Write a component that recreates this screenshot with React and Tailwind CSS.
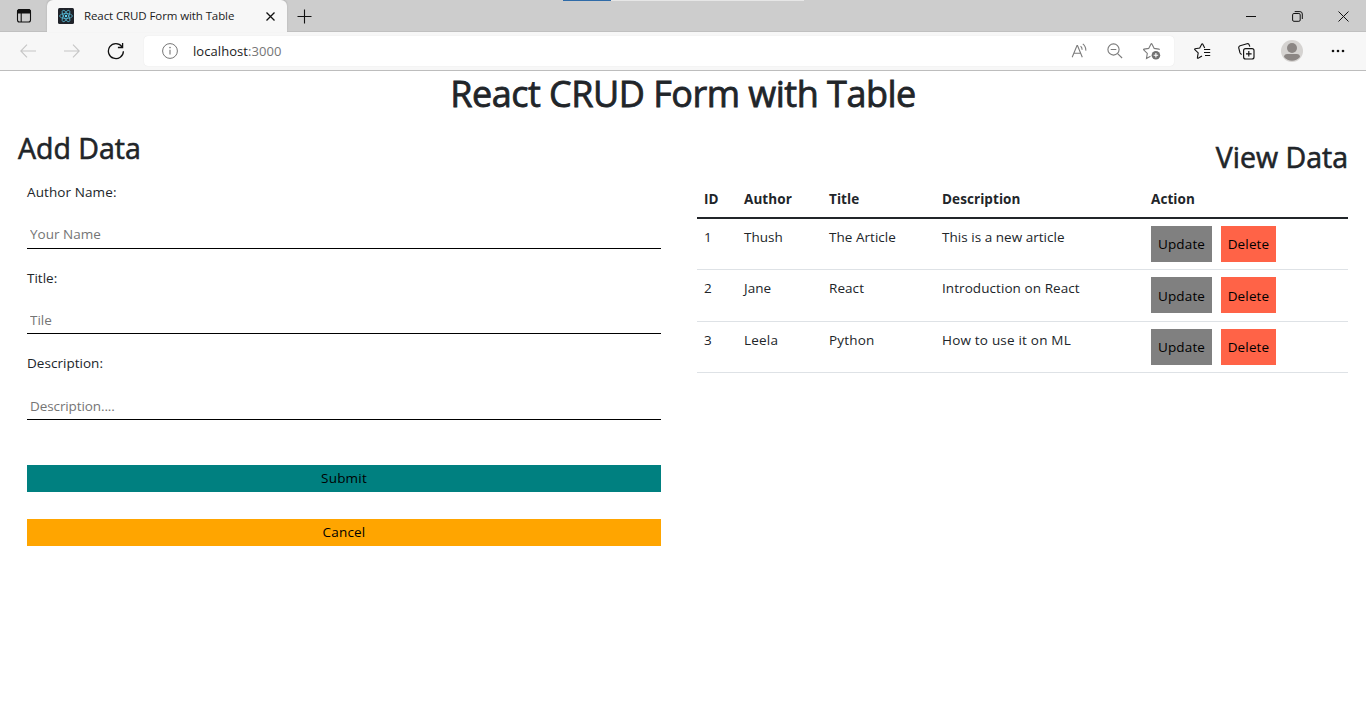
import React from "react";

const fields = [
  { label: "Author Name:", placeholder: "Your Name", size: "h-[69px]", pad: "mb-px", ls: "tracking-[0.1px]", ps: "tracking-[0px]" },
  { label: "Title:", placeholder: "Tile", size: "h-[68px]", pad: "mb-0", ls: "tracking-[0px]", ps: "tracking-[0px]" },
  { label: "Description:", placeholder: "Description....", size: "h-[69px]", pad: "mb-0", ls: "tracking-[0.03px]", ps: "tracking-[-0.1px]" },
];

const rows = [
  { id: 1, author: "Thush", title: "The Article", description: "This is a new article", height: "h-[51px]", ls: "tracking-[0.03px]", button: "leading-9" },
  { id: 2, author: "Jane", title: "React", description: "Introduction on React", height: "h-[52px]", ls: "tracking-[0.07px]", button: "leading-[38px]" },
  { id: 3, author: "Leela", title: "Python", description: "How to use it on ML", height: "h-[51px]", ls: "tracking-[0.2px]", button: "leading-9" },
];

const columns = "grid grid-cols-[40px_85px_113px_209px_1fr] pl-[7px]";

function ReactLogo() {
  return (
    <svg width="16" height="16" viewBox="0 0 16 16" className="shrink-0">
      <rect width="16" height="16" rx="1.5" fill="#20232a" />
      <g fill="none" stroke="#61dafb" strokeWidth="0.75" opacity="0.85">
        <ellipse cx="8" cy="8" rx="6.4" ry="2.5" />
        <ellipse cx="8" cy="8" rx="6.4" ry="2.5" transform="rotate(60 8 8)" />
        <ellipse cx="8" cy="8" rx="6.4" ry="2.5" transform="rotate(120 8 8)" />
      </g>
      <circle cx="8" cy="8" r="1.2" fill="#61dafb" />
    </svg>
  );
}

function TabStrip() {
  return (
    <div className="relative flex h-8 bg-[#cdcdcd] shadow-[inset_0_-1px_0_#c0c0c0]">
      <div className="absolute left-[563px] top-0 flex h-px w-[241px] bg-[#e6e6e6]">
        <div className="h-px w-12 bg-[#2f6ba8]" />
      </div>
      <div className="flex w-[47px] items-center justify-center">
        <svg width="16" height="16" viewBox="0 0 16 16" fill="none" stroke="#111">
          <rect x="1.5" y="1.5" width="13" height="12.5" rx="2" strokeWidth="1.1" />
          <path d="M1.5 4V3.5a2 2 0 0 1 2-2h9a2 2 0 0 1 2 2V5h-13z" fill="#111" />
          <path d="M5.2 5v9" strokeWidth="1.1" />
        </svg>
      </div>
      <div className="relative flex w-60 items-center rounded-t-md bg-[#f7f7f7] pl-[11px] pr-[11px] shadow-[0_-1px_2px_rgba(0,0,0,0.15)]">
        <ReactLogo />
        <span className="ml-[10px] flex-1 whitespace-nowrap text-[11.5px] leading-4 tracking-[-0.1px] text-[#1b1b1b]">
          React CRUD Form with Table
        </span>
        <svg width="11" height="11" viewBox="0 0 11 11" stroke="#111" strokeWidth="1.3">
          <path d="M1.5 1.5l8 8M9.5 1.5l-8 8" />
        </svg>
      </div>
      <div className="flex w-[35px] items-center justify-center">
        <svg width="15" height="15" viewBox="0 0 15 15" stroke="#111" strokeWidth="1.1">
          <path d="M7.5 0.5v14M0.5 7.5h14" />
        </svg>
      </div>
      <div className="ml-auto flex">
        <div className="flex w-[46px] items-center justify-center">
          <svg width="10" height="10" viewBox="0 0 10 10" stroke="#111"><path d="M0 5.5h10" /></svg>
        </div>
        <div className="flex w-[46px] items-center justify-center">
          <svg width="11" height="11" viewBox="0 0 11 11" fill="none" stroke="#111">
            <rect x="0.6" y="2.5" width="7.6" height="7.8" rx="1.3" />
            <path d="M2.7 0.6h5.2a2.4 2.4 0 0 1 2.4 2.4v5" />
          </svg>
        </div>
        <div className="flex w-[46px] items-center justify-center">
          <svg width="11" height="11" viewBox="0 0 11 11" stroke="#111"><path d="M0.5 0.5l10 10M10.5 0.5l-10 10" /></svg>
        </div>
      </div>
    </div>
  );
}

function Toolbar() {
  return (
    <div className="flex h-[39px] items-center border-b border-[#bdbdbd] bg-[#f7f7f7] pl-5">
      <svg width="16" height="14" viewBox="0 0 16 14" fill="none" stroke="#c6c6c6" strokeWidth="1.1">
        <path d="M16 7H0.8M7 0.7L0.8 7L7 13.3" />
      </svg>
      <svg width="16" height="14" viewBox="0 0 16 14" fill="none" stroke="#c6c6c6" strokeWidth="1.1" className="ml-7">
        <path d="M0 7h15.2M9 0.7L15.2 7L9 13.3" />
      </svg>
      <svg width="18" height="18" viewBox="0 0 18 18" fill="none" stroke="#111" strokeWidth="1.3" className="ml-[27px]">
        <path d="M16.4 9.2A7.5 7.5 0 1 1 14.9 4.6M15.6 0.9v4.6h-4.7" />
      </svg>
      <div className="ml-[19px] flex h-[30px] w-[1030px] items-center rounded bg-white pl-[18px] shadow-[0_0_1px_rgba(0,0,0,0.12)]">
        <svg width="16" height="16" viewBox="0 0 16 16" fill="none" stroke="#767676" strokeWidth="1">
          <circle cx="8" cy="8" r="7.4" />
          <path d="M8 6.7v4.8" strokeWidth="1.1" />
          <circle cx="8" cy="4.6" r="0.8" fill="#767676" stroke="none" />
        </svg>
        <span className="ml-[15px] text-[13px] leading-[18px] tracking-[0.06px] text-[#1b1b1b]">
          localhost<span className="text-[#767676]">:3000</span>
        </span>
        <svg width="16" height="16" viewBox="0 0 16 16" fill="none" stroke="#7b7b7b" strokeWidth="1.1" className="ml-auto">
          <path d="M1.2 14.2L6 2.5h0.5l4.8 11.7M2.9 10.2h6.7" />
          <path d="M9.6 3.2a4.5 4.5 0 0 1 1.5 3.6M11.8 0.9a8 8 0 0 1 3 6.7" />
        </svg>
        <svg width="16" height="16" viewBox="0 0 16 16" fill="none" stroke="#7b7b7b" strokeWidth="1.1" className="ml-5">
          <circle cx="6.5" cy="6.5" r="5.6" />
          <path d="M3.7 6.5h5.6M10.6 10.6l4.5 4.4" />
        </svg>
        <svg width="18" height="17" viewBox="0 0 18 17" fill="none" stroke="#7b7b7b" strokeWidth="1.1" className="ml-5 mr-[13px]">
          <path d="M7.5 15.2l-4 2.1 0.8-5-3.6-3.5c-0.3-0.3-0.1-0.7 0.3-0.8l4.7-0.7L8 2.8c0.2-0.4 0.7-0.4 0.9 0l2.3 4.5 4.7 0.7c0.4 0.1 0.5 0.5 0.3 0.8" transform="translate(0 -1.9)" />
          <circle cx="12.9" cy="12.2" r="4.3" fill="#707070" stroke="none" />
          <path d="M12.9 9.9v4.6M10.6 12.2h4.6" stroke="#fff" />
        </svg>
      </div>
      <svg width="17" height="17" viewBox="0 0 17 17" fill="none" stroke="#111" strokeWidth="1.1" className="ml-5">
        <path d="M8 13L4.1 15.2c-0.4 0.2-0.8 0-0.7-0.5l0.8-4.8L0.8 6.6c-0.3-0.3-0.2-0.8 0.3-0.9l4.6-0.6L7.8 1.1c0.2-0.4 0.7-0.4 0.9 0l2 4" />
        <path d="M10 6.5h6.2M10 9.5h6.2M11 12.5h5.2" strokeWidth="1.1" />
      </svg>
      <svg width="17" height="17" viewBox="0 0 17 17" fill="none" stroke="#111" strokeWidth="1.15" className="ml-[27px]">
        <path d="M3.8 11.4C2.8 11.3 2.3 10.7 2 9.9L0.8 5.1c-0.3-1 0.3-2 1.3-2.3L9 0.8c1-0.3 2 0.3 2.3 1.3l0.5 1.6" />
        <rect x="5.6" y="5.6" width="10.4" height="10.4" rx="2" />
        <path d="M10.8 8v5.6M8 10.8h5.6" />
      </svg>
      <svg width="22" height="22" viewBox="0 0 22 22" className="ml-[26px]">
        <circle cx="11" cy="11" r="11" fill="#d5d3d1" />
        <circle cx="11" cy="8" r="5" fill="#8b8684" />
        <path d="M3 17.1c0-2 1.4-3 3.2-3h9.6c1.8 0 3.2 1 3.2 3a10.5 10.5 0 0 1-16 0z" fill="#8b8684" />
      </svg>
      <svg width="14" height="4" viewBox="0 0 14 4" fill="#111" className="ml-7">
        <circle cx="2" cy="2" r="1.3" /><circle cx="7" cy="2" r="1.3" /><circle cx="12" cy="2" r="1.3" />
      </svg>
    </div>
  );
}

function AddForm() {
  return (
    <section className="w-[661px] pt-4">
      <h2 className="ml-[18px] text-[28.5px] font-medium leading-[34px] [-webkit-text-stroke:0.6px_#212529]">Add Data</h2>
      <div className="ml-[27px] mt-[15px]">
        {fields.map((field) => (
          <div key={field.label} className={`mb-[17px] flex flex-col justify-between border-b border-black ${field.size}`}>
            <label className={`text-[13.5px] leading-6 ${field.ls}`}>{field.label}</label>
            <input
              type="text"
              placeholder={field.placeholder}
              className={`h-[26px] w-full px-[3px] text-[13.5px] text-black outline-none placeholder:text-[#757575] ${field.pad} ${field.ps}`}
            />
          </div>
        ))}
        <button className="mt-[45px] block h-[27px] w-full bg-[#008080] text-[13.5px] leading-[27px] tracking-[0.2px] text-black">Submit</button>
        <button className="mt-[27px] block h-[27px] w-full bg-[#ffa500] text-[13.5px] leading-[27px] tracking-[0.2px] text-black">Cancel</button>
      </div>
    </section>
  );
}

function DataTable() {
  return (
    <section className="ml-9 w-[651px] pt-[25px] text-[13.5px]">
      <h2 className="text-right text-[28.5px] font-medium leading-[34px] [-webkit-text-stroke:0.6px_#212529]">View Data</h2>
      <div className={`${columns} mt-[13px] h-8 border-b-2 border-[#212529] font-bold leading-6 tracking-[0.08px]`}>
        <span>ID</span>
        <span>Author</span>
        <span>Title</span>
        <span>Description</span>
        <span>Action</span>
      </div>
      {rows.map((row) => (
        <div key={row.id} className={`${columns} border-b border-[#dee2e6] pt-[7px] leading-[22px] ${row.ls} ${row.height}`}>
          <span>{row.id}</span>
          <span>{row.author}</span>
          <span>{row.title}</span>
          <span>{row.description}</span>
          <div className={`flex gap-[9px] tracking-[0.15px] text-black ${row.button}`}>
            <button className="flex h-9 w-[61px] justify-center bg-[#808080]">Update</button>
            <button className="flex h-9 w-[55px] justify-center bg-[#ff6347]">Delete</button>
          </div>
        </div>
      ))}
    </section>
  );
}

export default function App() {
  return (
    <div className="flex h-[726px] w-[1366px] flex-col overflow-hidden bg-white font-['Open_Sans','Noto_Sans',sans-serif] text-[#212529]">
      <TabStrip />
      <Toolbar />
      <main className="flex-1">
        <h1 className="h-11 pt-px text-center text-[36px] font-medium leading-[44px] tracking-[-0.5px] [-webkit-text-stroke:0.8px_#212529]">React CRUD Form with Table</h1>
        <div className="flex">
          <AddForm />
          <DataTable />
        </div>
      </main>
    </div>
  );
}
